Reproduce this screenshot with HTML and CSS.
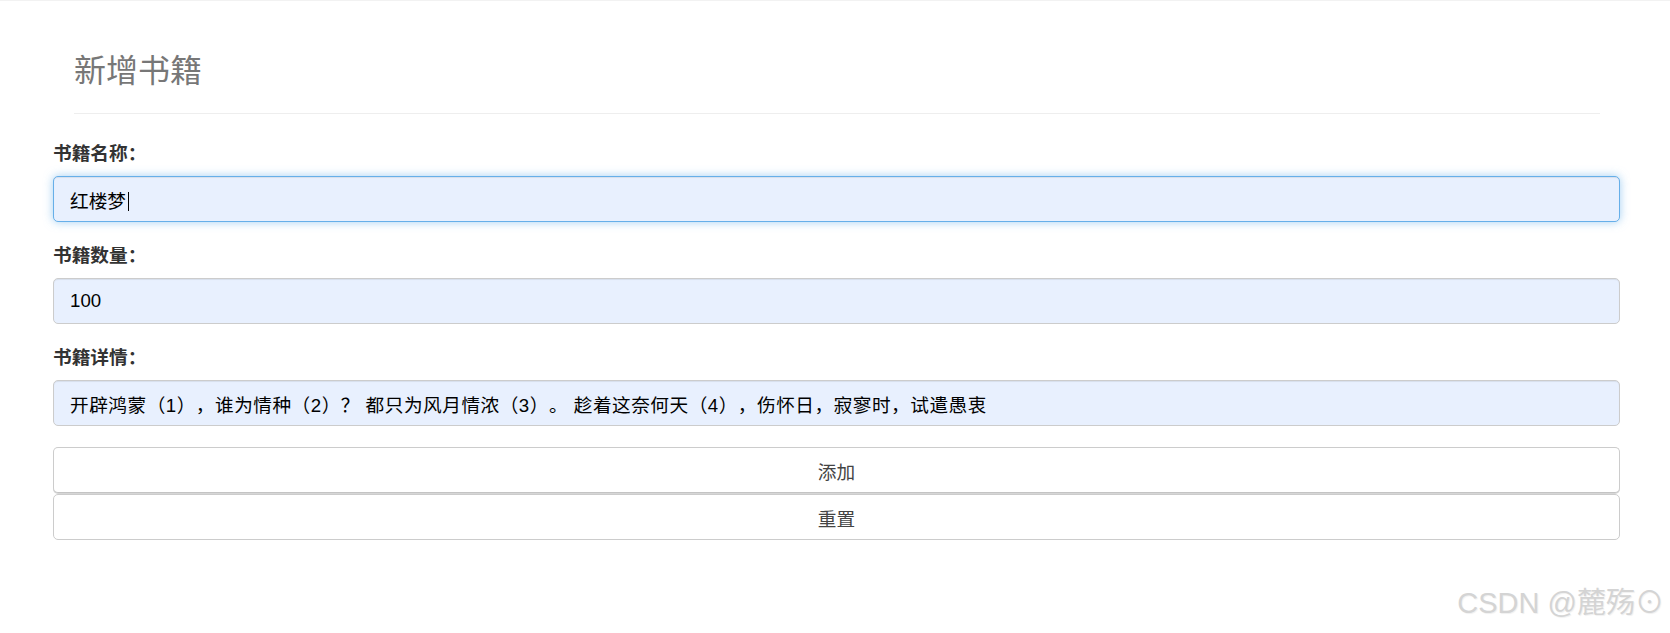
FILE: index.html
```html
<!DOCTYPE html>
<html lang="zh-CN">
<head>
    <meta charset="UTF-8">
    <meta name="viewport" content="width=device-width, initial-scale=1.0">
    <title>新增书籍</title>
    <link rel="stylesheet" href="styles.css">
</head>
<body>
    <div class="container">
        <div class="page-header">
            <h3>新增书籍</h3>
        </div>
        <!--表单-->
        <form class="book-form">
            <div class="form-group">
                <label for="bookName">书籍名称：</label>
                <div class="field">
                    <input type="text" id="bookName" class="form-control is-focus" value="红楼梦">
                    <span class="caret"></span>
                </div>
            </div>
            <div class="form-group">
                <label for="bookCounts">书籍数量：</label>
                <input type="text" id="bookCounts" class="form-control" value="100">
            </div>
            <div class="form-group">
                <label for="detail">书籍详情：</label>
                <input type="text" id="detail" class="form-control detail" value="开辟鸿蒙（1），谁为情种（2）？ 都只为风月情浓（3）。 趁着这奈何天（4），伤怀日，寂寥时，试遣愚衷">
            </div>
            <button type="button" class="btn btn-block">添加</button>
            <button type="reset" class="btn btn-block btn-reset">重置</button>
        </form>
    </div>
    <div class="watermark">CSDN @麓殇⊙</div>
</body>
</html>
```

FILE: styles.css
```css
html{
    box-sizing: border-box;
    font-family: "Liberation Sans", "Noto Sans CJK SC", sans-serif;
    font-size: 18.67px;
    text-spacing-trim: space-all;
}
*,
*::before,
*::after{
    box-sizing: inherit;
}
body{
    margin: 0;
    border-top: 1px solid #f2f2f2;
    color: #333;
    position: relative;
    min-height: 632px;
}
.container{
    padding-left: 53px;
    padding-right: 50px;
}
.page-header{
    margin: 0 20px 27px 21px;
    border-bottom: 1px solid #eee;
}
.page-header h3{
    margin: 0;
    padding: 50px 0 27px;
    font-family: "Noto Sans CJK SC", sans-serif;
    font-size: 32px;
    font-weight: 400;
    line-height: 35px;
    color: #777;
}
.form-group{
    margin-bottom: 21px;
}
.form-group label{
    display: block;
    margin-bottom: 9px;
    font-weight: 700;
    line-height: 26px;
    color: #333;
}
.field{
    position: relative;
}
.form-control{
    display: block;
    width: 100%;
    height: 46px;
    padding: 0 16px;
    font-family: inherit;
    font-size: 18.67px;
    text-spacing-trim: space-all;
    color: #000;
    background-color: #e8f0fe;
    border: 1px solid #ccc;
    border-radius: 5px;
    box-shadow: inset 0 1px 1px rgba(0,0,0,.075);
    outline: none;
}
.form-control.detail{
    letter-spacing: .5px;
}
.form-control.is-focus{
    border-color: #66afe9;
    box-shadow: inset 0 1px 1px rgba(0,0,0,.075), 0 0 10px rgba(102,175,233,.6);
}
.caret{
    position: absolute;
    left: 75px;
    top: 16px;
    width: 1px;
    height: 19px;
    background: #000;
}
.btn{
    display: block;
    width: 100%;
    height: 46px;
    padding: 0;
    font-family: inherit;
    font-size: 18.67px;
    color: #444;
    background-color: #fff;
    border: 1px solid #ccc;
    border-radius: 5px;
    cursor: pointer;
}
.btn:first-of-type{
    border-bottom-color: #c4c4c4;
    box-shadow: 0 1px 0 #d6d6d6;
}
.btn-reset{
    margin-top: 1px;
}
.watermark{
    position: absolute;
    right: 6px;
    top: 578px;
    font-size: 29px;
    font-weight: 400;
    color: #d4d4d4;
    text-shadow: 1px 1px 1px #f0f0f0;
    white-space: nowrap;
}
```
